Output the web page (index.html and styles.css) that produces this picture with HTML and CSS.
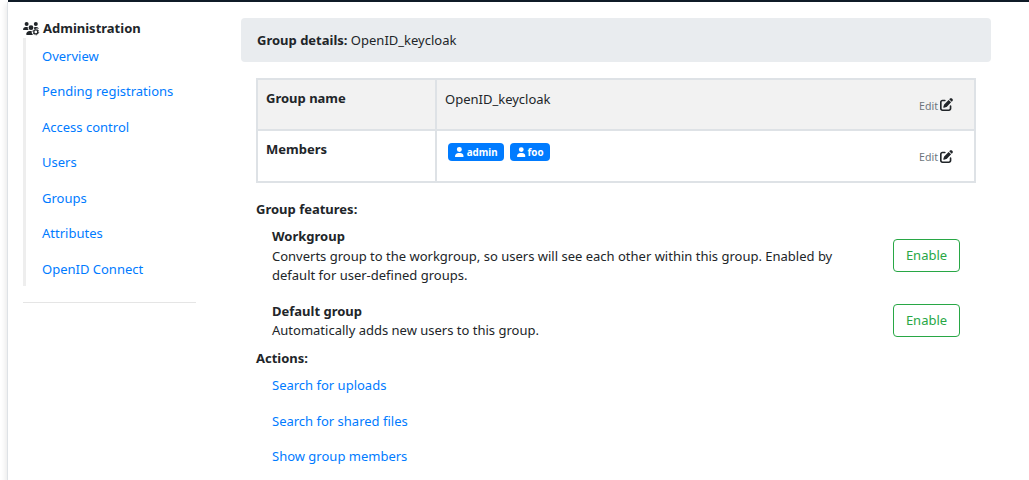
FILE: index.html
```html
<!DOCTYPE html>
<html lang="en">

<head>
    <meta charset="UTF-8">
    <meta name="viewport" content="width=device-width, initial-scale=1.0">
    <title>Group details</title>

    <link rel="stylesheet" href="styles.css">
</head>

<body>
    <!-- icons used more than once -->
    <svg class="sprite">
        <symbol id="icon-user" viewBox="0 0 448 512">
            <path d="M224 256A128 128 0 1 0 224 0a128 128 0 1 0 0 256zm-45.7 48C79.8 304 0 383.8 0 482.3C0 498.7 13.3 512 29.7 512H418.3c16.4 0 29.7-13.3 29.7-29.7C448 383.8 368.2 304 269.7 304H178.3z"/>
        </symbol>
        <symbol id="icon-edit" viewBox="0 0 512 512">
            <path d="M471.6 21.7c-21.9-21.9-57.3-21.9-79.2 0L362.3 51.7l97.9 97.9 30.1-30.1c21.9-21.9 21.9-57.3 0-79.2L471.6 21.7zm-299.2 220c-6.1 6.1-10.8 13.6-13.5 21.9l-29.6 88.8c-2.9 8.6-.6 18.1 5.8 24.6s15.9 8.7 24.6 5.8l88.8-29.6c8.2-2.7 15.7-7.4 21.9-13.5L437.7 172.3 339.7 74.3 172.4 241.7zM96 64C43 64 0 107 0 160V416c0 53 43 96 96 96H352c53 0 96-43 96-96V320c0-17.7-14.3-32-32-32s-32 14.3-32 32v96c0 17.7-14.3 32-32 32H96c-17.7 0-32-14.3-32-32V160c0-17.7 14.3-32 32-32h96c17.7 0 32-14.3 32-32s-14.3-32-32-32H96z"/>
        </symbol>
    </svg>

    <div class="top-line"></div>
    <div class="page">
        <div class="sidebar">
            <div class="sidebar-title">
                <svg class="icon-users" viewBox="0 0 640 512">
                    <circle cx="144" cy="80" r="80"/>
                    <circle cx="512" cy="80" r="80"/>
                    <circle cx="320" cy="224" r="96"/>
                    <path d="M0 299c0-59 48-107 107-107h42c16 0 31 4 45 10-12 48 2 87 42 118H21c-12 0-21-10-21-21z"/>
                    <path d="M446 202c14-6 29-10 45-10h42c50 0 92 34 104 81-40-22-90-24-132-9-22 9-46 18-71 17 14-23 19-50 12-79z"/>
                    <path d="M128 485c0-73 60-133 133-133h86c-5 62 11 119 61 160H155c-15 0-27-12-27-27z"/>
                    <circle class="gear-teeth" cx="512" cy="392" r="118"/>
                    <circle class="gear-ring" cx="512" cy="392" r="80"/>
                </svg>
                <b>Administration</b>
            </div>
            <div class="menu">
                <a class="link" href="#">Overview</a>
                <a class="link" href="#">Pending registrations</a>
                <a class="link" href="#">Access control</a>
                <a class="link" href="#">Users</a>
                <a class="link" href="#">Groups</a>
                <a class="link" href="#">Attributes</a>
                <a class="link" href="#">OpenID Connect</a>
            </div>
            <hr>
        </div>

        <div class="content">
            <div class="title-bar"><b>Group details:</b> OpenID_keycloak</div>

            <div class="details">
                <table>
                    <tr>
                        <th>Group name</th>
                        <td>
                            <div class="cell">
                                <span>OpenID_keycloak</span>
                                <a class="edit" href="#">Edit<svg class="icon-edit"><use href="#icon-edit"/></svg></a>
                            </div>
                        </td>
                    </tr>
                    <tr>
                        <th>Members</th>
                        <td>
                            <div class="cell">
                                <div class="badges">
                                    <span class="badge"><svg class="icon-user"><use href="#icon-user"/></svg>admin</span>
                                    <span class="badge"><svg class="icon-user"><use href="#icon-user"/></svg>foo</span>
                                </div>
                                <a class="edit" href="#">Edit<svg class="icon-edit"><use href="#icon-edit"/></svg></a>
                            </div>
                        </td>
                    </tr>
                </table>

                <b>Group features:</b>
                <div class="feature">
                    <div class="feature-text">
                        <b>Workgroup</b>
                        <p>Converts group to the workgroup, so users will see each other within this group. Enabled by default for user-defined groups.</p>
                    </div>
                    <button class="btn">Enable</button>
                </div>
                <div class="feature">
                    <div class="feature-text">
                        <b>Default group</b>
                        <p>Automatically adds new users to this group.</p>
                    </div>
                    <button class="btn">Enable</button>
                </div>

                <b>Actions:</b>
                <div class="actions">
                    <a class="link" href="#">Search for uploads</a>
                    <a class="link" href="#">Search for shared files</a>
                    <a class="link" href="#">Show group members</a>
                </div>
            </div>
        </div>
    </div>
</body>

</html>
```
FILE: styles.css
```css
* {
    box-sizing: border-box;
}

body {
    margin: 0;
    height: 480px;
    overflow: hidden;
    background-color: white;
    color: #212529;
    font-family: "Noto Sans", sans-serif;
    font-size: 13px;
    line-height: 19.5px;
}

b {
    font-weight: 700;
}

a {
    text-decoration: none;
}

p {
    margin: 0;
}

svg {
    fill: currentColor;
}

.sprite {
    display: none;
}

.top-line {
    height: 2px;
    margin-left: 8px;
    background-color: #101c28;
}

.page {
    display: flex;
    height: 480px;
    margin-left: 7px;
    padding: 16px 38px 0 15px;
    border-left: 1px solid #dee2e6;
    box-shadow: -2px 2px 5px rgba(0, 0, 0, .08);
}

.sidebar {
    width: 173px;
    margin-right: 45px;
}

.sidebar-title {
    display: flex;
    align-items: center;
    gap: 4px;
    height: 20px;
}

.sidebar-title b {
    padding-top: 1px;
}

.icon-users {
    width: 16px;
    height: 13px;
    overflow: visible;
}

.gear-ring {
    fill: none;
    stroke: currentColor;
    stroke-width: 52;
}

.gear-teeth {
    fill: none;
    stroke: currentColor;
    stroke-width: 34;
    stroke-dasharray: 61.8 61.8;
}

.menu {
    height: 248px;
    padding: .5px 0 0 16px;
    border-left: 3px solid #eee;
}

.link {
    display: block;
    padding: 8px 0;
    color: #007bff;
}

hr {
    margin: 16px 0 0;
    border: 0;
    border-top: 1px solid rgba(0, 0, 0, .1);
}

.content {
    width: 750px;
}

.title-bar {
    padding: 13px 16px 11px;
    margin-bottom: 16px;
    background-color: #e9ecef;
    border-radius: 4px;
    height: 44px;
}

.details {
    padding: 0 15px;
}

table {
    width: 720px;
    margin-bottom: 16.5px;
    border-collapse: collapse;
    table-layout: fixed;
}

tr:first-child {
    background-color: #f2f2f2;
}

th,
td {
    height: 51px;
    padding: 9px 8px 7px;
    border: 2px solid #dee2e6;
    text-align: left;
    vertical-align: top;
}

tr:last-child th,
tr:last-child td {
    height: 52px;
}

th {
    width: 179px;
}

.cell {
    display: flex;
    justify-content: space-between;
    padding-top: 1px;
}

.edit {
    display: flex;
    align-items: center;
    gap: 2px;
    height: 19px;
    margin: 7px 13px 0 0;
    color: #6c757d;
    font-size: 10.6px;
}

.icon-edit {
    width: 13px;
    height: 13px;
    margin-bottom: 3px;
    color: #212529;
}

tr:first-child .icon-edit {
    margin-bottom: 4px;
}

.badges {
    display: flex;
    gap: 6px;
    padding: 2px 0 0 3px;
}

.badge {
    display: flex;
    align-items: center;
    gap: 3px;
    height: 18px;
    padding: 1px 6.5px 0 7px;
    border-radius: 4px;
    background-color: #007bff;
    color: white;
    font-size: 9.75px;
    font-weight: 700;
}

.badge:first-child {
    width: 56px;
}

.badge:last-child {
    gap: 2px;
    width: 40px;
}

.icon-user {
    width: 9px;
    height: 10px;
    margin-bottom: 1px;
}

.feature {
    display: flex;
    align-items: center;
    justify-content: space-between;
    padding: 8px 16px;
}

.feature-text {
    width: 580px;
}

.btn {
    width: 67px;
    height: 33px;
    margin-bottom: 1px;
    padding: 0;
    border: 1px solid #28a745;
    border-radius: 4px;
    background-color: white;
    color: #28a745;
    font: inherit;
}

.actions {
    padding-left: 16px;
}
```
